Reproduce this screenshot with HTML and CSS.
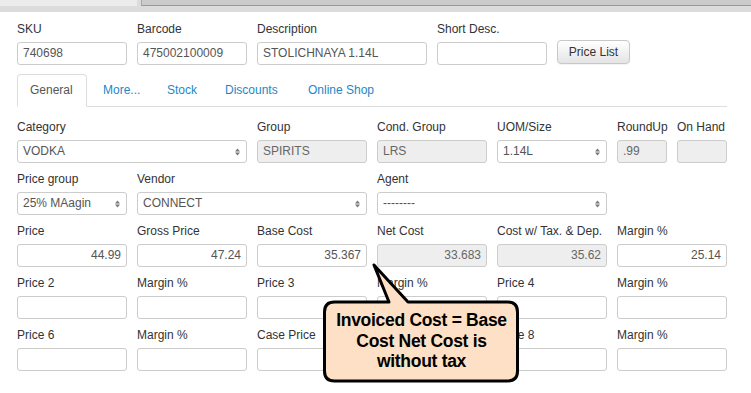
FILE: index.html
```html
<!DOCTYPE html>
<html>
<head>
<meta charset="utf-8">
<link rel="stylesheet" href="styles.css">
</head>
<body>
<div class="topbar">
  <div class="tb-left"></div>
  <div class="tb-right"></div>
</div>
<div class="page">
  <div class="row1">
    <div class="field"><label>SKU</label><div class="input">740698</div></div>
    <div class="field"><label>Barcode</label><div class="input">475002100009</div></div>
    <div class="field"><label>Description</label><div class="input">STOLICHNAYA 1.14L</div></div>
    <div class="field"><label>Short Desc.</label><div class="input"></div></div>
    <div class="field btn-cell"><button class="btn">Price List</button></div>
  </div>

  <ul class="tabs">
    <li class="tab active">General</li>
    <li class="tab t-more">More...</li>
    <li class="tab t-stock">Stock</li>
    <li class="tab t-disc">Discounts</li>
    <li class="tab">Online Shop</li>
  </ul>

  <div class="tabbody">
    <div class="grid">
      <div class="field span2"><label>Category</label><div class="input select"><span>VODKA</span><svg class="arr" width="5" height="8" viewBox="0 0 5 8"><path d="M0 3.5 L2.5 0.5 L5 3.5 Z M0 4.5 L2.5 7.5 L5 4.5 Z" fill="#777"/></svg></div></div>
      <div class="field"><label>Group</label><div class="input dis">SPIRITS</div></div>
      <div class="field"><label>Cond. Group</label><div class="input dis">LRS</div></div>
      <div class="field"><label>UOM/Size</label><div class="input select"><span>1.14L</span><svg class="arr" width="5" height="8" viewBox="0 0 5 8"><path d="M0 3.5 L2.5 0.5 L5 3.5 Z M0 4.5 L2.5 7.5 L5 4.5 Z" fill="#777"/></svg></div></div>
      <div class="field split">
        <div class="field"><label>RoundUp</label><div class="input dis">.99</div></div>
        <div class="field"><label>On Hand</label><div class="input dis"></div></div>
      </div>

      <div class="field"><label>Price group</label><div class="input select"><span>25% MAagin</span><svg class="arr" width="5" height="8" viewBox="0 0 5 8"><path d="M0 3.5 L2.5 0.5 L5 3.5 Z M0 4.5 L2.5 7.5 L5 4.5 Z" fill="#777"/></svg></div></div>
      <div class="field span2"><label>Vendor</label><div class="input select"><span>CONNECT</span><svg class="arr" width="5" height="8" viewBox="0 0 5 8"><path d="M0 3.5 L2.5 0.5 L5 3.5 Z M0 4.5 L2.5 7.5 L5 4.5 Z" fill="#777"/></svg></div></div>
      <div class="field span2"><label>Agent</label><div class="input select"><span>--------</span><svg class="arr" width="5" height="8" viewBox="0 0 5 8"><path d="M0 3.5 L2.5 0.5 L5 3.5 Z M0 4.5 L2.5 7.5 L5 4.5 Z" fill="#777"/></svg></div></div>
      <div class="field"></div>

      <div class="field"><label>Price</label><div class="input num">44.99</div></div>
      <div class="field"><label>Gross Price</label><div class="input num">47.24</div></div>
      <div class="field"><label>Base Cost</label><div class="input num">35.367</div></div>
      <div class="field"><label>Net Cost</label><div class="input num dis">33.683</div></div>
      <div class="field"><label>Cost w/ Tax. &amp; Dep.</label><div class="input num dis">35.62</div></div>
      <div class="field"><label>Margin %</label><div class="input num">25.14</div></div>

      <div class="field"><label>Price 2</label><div class="input"></div></div>
      <div class="field"><label>Margin %</label><div class="input"></div></div>
      <div class="field"><label>Price 3</label><div class="input"></div></div>
      <div class="field"><label>Margin %</label><div class="input"></div></div>
      <div class="field"><label>Price 4</label><div class="input"></div></div>
      <div class="field"><label>Margin %</label><div class="input"></div></div>

      <div class="field"><label>Price 6</label><div class="input"></div></div>
      <div class="field"><label>Margin %</label><div class="input"></div></div>
      <div class="field"><label>Case Price</label><div class="input"></div></div>
      <div class="field"><label>Margin %</label><div class="input"></div></div>
      <div class="field"><label>Price 8</label><div class="input"></div></div>
      <div class="field"><label>Margin %</label><div class="input"></div></div>
    </div>
    <h3 class="section">Terms for Sale</h3>
  </div>
</div>

<div class="callout">
  <svg class="bubble" width="197" height="122" viewBox="0 0 197 122">
    <path d="M11.5 40 L66 40 L51 3 L85 40 L184.5 40 Q194.5 40 194.5 50 L194.5 109 Q194.5 119 184.5 119 L11.5 119 Q1.5 119 1.5 109 L1.5 50 Q1.5 40 11.5 40 Z" fill="#fde0c5" stroke="#000" stroke-width="3" stroke-linejoin="round"/>
  </svg>
  <div class="callout-text">Invoiced Cost = Base<br>Cost Net Cost is<br>without tax</div>
</div>
</body>
</html>
```

FILE: styles.css
```css
* { box-sizing: border-box; }
html, body { margin: 0; padding: 0; background: #fff; }
body {
  font-family: "Liberation Sans", Arial, sans-serif;
  font-size: 12px;
  color: #333;
  width: 751px;
  height: 393px;
  overflow: hidden;
  position: relative;
}
.topbar {
  height: 12px;
  background: #dcdcdc;
  display: flex;
  align-items: flex-start;
}
.tb-left {
  width: 137px;
  height: 6px;
  background: #ececec;
}
.tb-right {
  margin-left: 4px;
  flex: 1;
  height: 6px;
  background: #cbcbcb;
  border-left: 1px solid #a8a8a8;
  border-bottom: 1px solid #9a9a9a;
}
.page {
  padding: 9px 0 0 17px;
}
.row1 {
  display: grid;
  grid-template-columns: 110px 110px 170px 110px 73px;
  column-gap: 10px;
  height: 44px;
}
.grid {
  display: grid;
  grid-template-columns: repeat(6, 110px);
  column-gap: 10px;
  row-gap: 8px;
}
.field { display: flex; flex-direction: column; min-width: 0; }
.field label {
  display: block;
  height: 17px;
  line-height: 17px;
  margin-bottom: 4px;
  color: #333;
  white-space: nowrap;
}
.span2 { grid-column: span 2; }
.split {
  flex-direction: row;
  gap: 10px;
}
.split .field { width: 50px; }
.input {
  height: 23px;
  border: 1px solid #ccc;
  border-radius: 3px;
  background: #fff;
  padding: 0 5px;
  line-height: 21px;
  color: #555;
  white-space: nowrap;
  overflow: hidden;
}
.input.num { text-align: right; }
.input.dis { background: #eee; color: #666; }
.select {
  display: flex;
  align-items: center;
  justify-content: space-between;
}
.select .arr { flex: none; margin-right: 1px; }
.btn-cell { justify-content: flex-end; padding-bottom: 1px; }
.btn {
  width: 73px;
  height: 24px;
  margin: 0;
  padding: 0;
  font-family: "Liberation Sans", Arial, sans-serif;
  font-size: 12px;
  color: #333;
  border: 1px solid #c8c8c8;
  border-radius: 4px;
  background: linear-gradient(#ffffff, #e4e4e4);
  box-shadow: 0 1px 1px rgba(0,0,0,0.05);
}
.tabs {
  list-style: none;
  margin: 9px 0 0 0;
  padding: 0;
  width: 710px;
  height: 33px;
  display: flex;
  border-bottom: 1px solid #ddd;
}
.tab {
  height: 33px;
  padding: 0 0 0 13px;
  line-height: 31px;
  color: #1a88c9;
  border: 1px solid transparent;
  border-radius: 4px 4px 0 0;
  white-space: nowrap;
}
.tab.active {
  width: 70px;
  margin-right: 2px;
  padding-left: 12px;
  color: #555;
  border-color: #ddd;
  border-bottom-color: #fff;
  background: #fff;
}
.t-more { width: 64px; }
.t-stock { width: 58px; }
.t-disc { width: 83px; }
.tabbody { padding-top: 12px; }
.section {
  margin: 19px 0 0 0;
  font-size: 17px;
  font-weight: bold;
  color: #333;
  line-height: 20px;
}
.callout {
  position: absolute;
  left: 323px;
  top: 262px;
  width: 197px;
  height: 122px;
}
.bubble { display: block; }
.callout-text {
  position: absolute;
  left: 0;
  top: 48px;
  width: 197px;
  text-align: center;
  font-family: "Liberation Sans", Arial, sans-serif;
  font-weight: bold;
  font-size: 17.5px;
  line-height: 20.5px;
  color: #000;
  letter-spacing: -0.3px;
}
```
